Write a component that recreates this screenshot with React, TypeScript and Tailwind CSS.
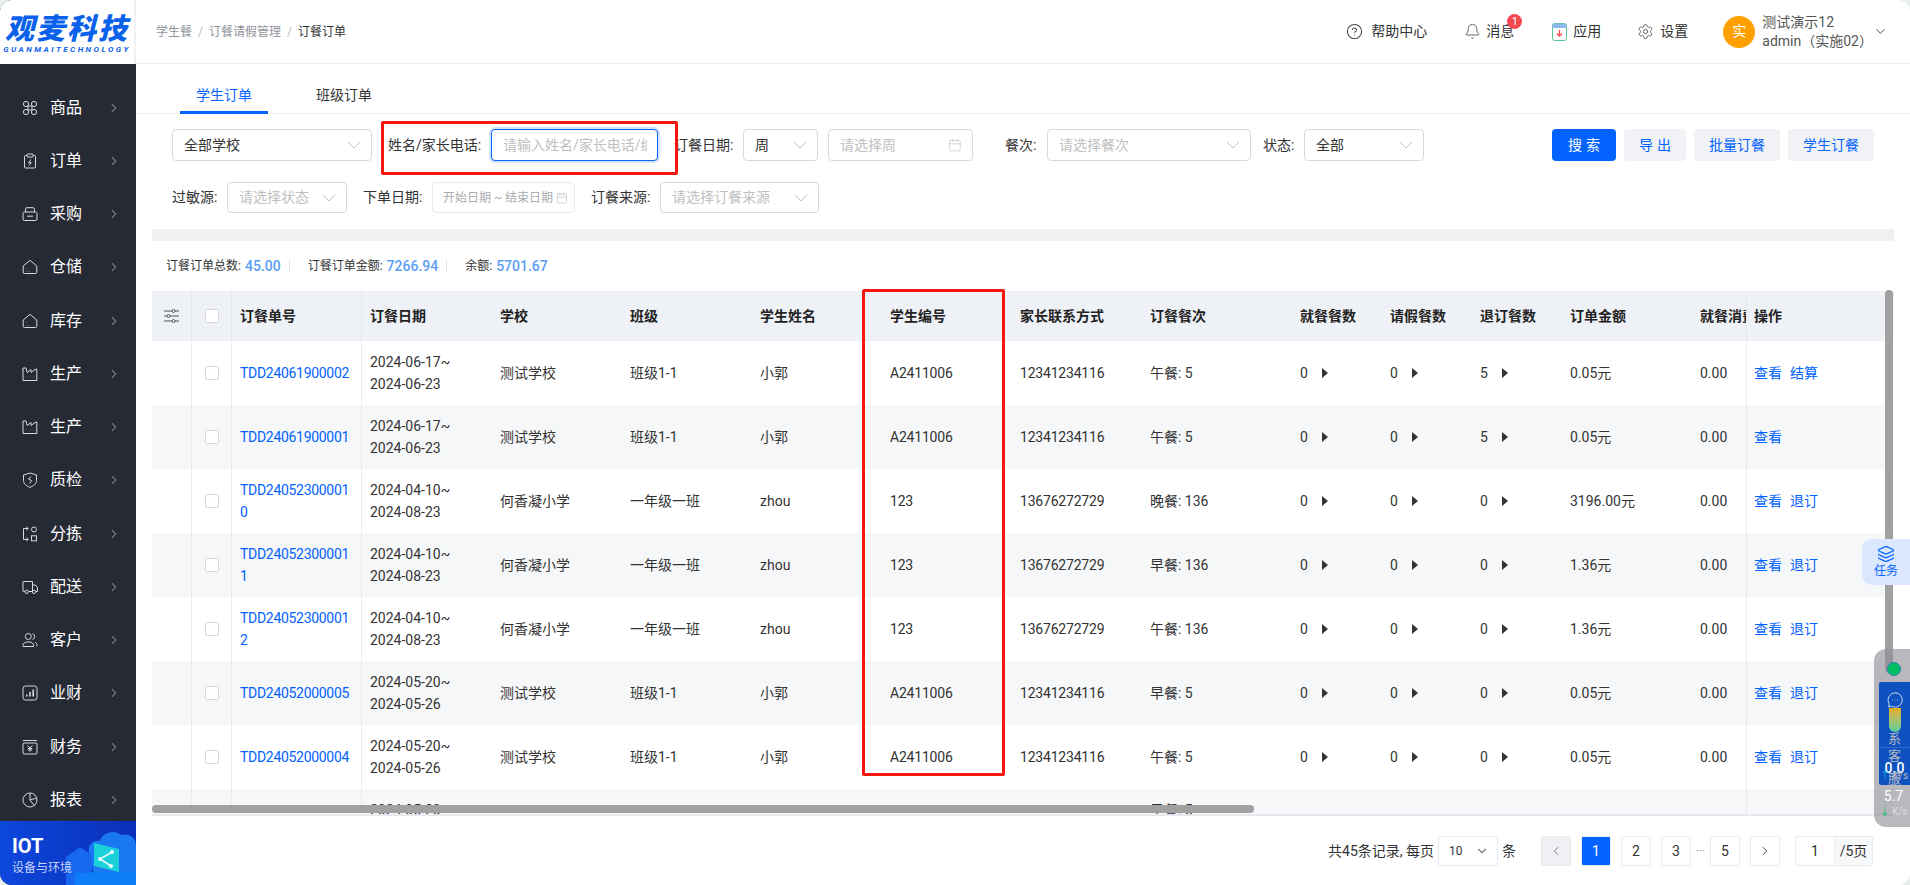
import React from "react";
import { CircleHelp, Bell, Settings, ChevronDown, ChevronRight, ChevronLeft, Calendar, Layers } from "lucide-react";

const Caret = () => (
	<svg width="14" height="8" viewBox="0 0 14 8" fill="none" stroke="#bfc2c7" strokeWidth="1" className="shrink-0">
		<polyline points="1,1 7,7 13,1" />
	</svg>
);

const sideIcons: Record<string, React.ReactNode> = {
	goods: (
		<>
			<circle cx="4" cy="4" r="2.6" />
			<circle cx="12" cy="4" r="2.6" />
			<circle cx="4" cy="12" r="2.6" />
			<circle cx="12" cy="12" r="2.6" />
			<rect x="6" y="6" width="4" height="4" />
		</>
	),
	order: (
		<>
			<path d="M5 2.5H3.5A1 1 0 0 0 2.5 3.5V14a1 1 0 0 0 1 1h9a1 1 0 0 0 1-1V3.5a1 1 0 0 0-1-1H11" />
			<rect x="5" y="1" width="6" height="3" rx=".5" />
			<path d="M9 6.5 6.5 9.7H9.3L7 12.5" />
		</>
	),
	buy: (
		<>
			<rect x="1" y="6" width="14" height="8.5" rx="1.5" />
			<path d="M3.5 6V3.2A1.5 1.5 0 0 1 5 1.7h6a1.5 1.5 0 0 1 1.5 1.5V6" />
			<path d="M5 10.2h6" />
		</>
	),
	store: (
		<>
			<path d="M1.2 7 8 1.3 14.8 7v6.2a1.3 1.3 0 0 1-1.3 1.3h-11a1.3 1.3 0 0 1-1.3-1.3Z" />
			<path d="M4.6 9.6v.2M4.6 12v.2M7 12v.2" strokeWidth="1.5" />
		</>
	),
	factory: (
		<>
			<path d="M1 14.5V2h3l1.2 4.5L9 3.5v3l4-3 1.8-.5v11.5Z" />
			<path d="M4.5 11h.2M8 11h.2M11.5 11h.2" strokeWidth="1.5" />
		</>
	),
	check: (
		<>
			<path d="M8 1 14.5 3v5.5c0 3.2-2.8 5.5-6.5 6.8-3.7-1.3-6.5-3.6-6.5-6.8V3Z" />
			<path d="M8.7 4.5 6.6 7.2l3 1.3-2 3" />
		</>
	),
	sort: (
		<>
			<path d="M6 2.5H1.5v11H6M4.3 11.5 6.3 13.5 4.3 15M4.3.8 6.3 2.5 4.3 4.2" />
			<circle cx="12" cy="3.5" r="2.5" />
			<rect x="9.5" y="9.8" width="5" height="5" />
		</>
	),
	truck: (
		<>
			<path d="M3 12.5H1.5a.5.5 0 0 1-.5-.5V3a.5.5 0 0 1 .5-.5h9v10H6.5M10.5 6h3l2 3v3.5h-1.7" />
			<circle cx="4.7" cy="12.8" r="1.7" />
			<circle cx="12" cy="12.8" r="1.7" />
		</>
	),
	user: (
		<>
			<circle cx="6.3" cy="4.5" r="3" />
			<path d="M1 14.5v-1c0-2.2 2-3.6 5.3-3.6s5.3 1.4 5.3 3.6v1Z" />
			<path d="M10.5 1.6a3 3 0 0 1 0 5.8M13 10.2c1.3.6 2 1.8 2 3.2v1" />
		</>
	),
	biz: (
		<>
			<rect x="1" y="1" width="14" height="14" rx="2.5" />
			<path d="M4.8 11.5V9.5M8 11.5V7M11.2 11.5V4.5" strokeWidth="1.6" />
		</>
	),
	money: (
		<>
			<path d="M1 1.5h14" />
			<rect x="1" y="4" width="14" height="11" rx="1" />
			<path d="M5.5 6.5 8 9l2.5-2.5M8 9v3.5M5.8 9.5h4.4M5.8 11h4.4" />
		</>
	),
	report: (
		<>
			<circle cx="8" cy="8" r="7" />
			<path d="M8 1v7l4 5.3M8 8 14.5 6" />
		</>
	),
};

const menu = [
	["goods", "商品"],
	["order", "订单"],
	["buy", "采购"],
	["store", "仓储"],
	["store", "库存"],
	["factory", "生产"],
	["factory", "生产"],
	["check", "质检"],
	["sort", "分拣"],
	["truck", "配送"],
	["user", "客户"],
	["biz", "业财"],
	["money", "财务"],
	["report", "报表"],
];

const colClass = "grid grid-cols-[40px_40px_130px_130px_130px_130px_130px_130px_130px_150px_90px_90px_90px_130px_54px_148px]";

const headers = ["订餐单号", "订餐日期", "学校", "班级", "学生姓名", "学生编号", "家长联系方式", "订餐餐次", "就餐餐数", "请假餐数", "退订餐数", "订单金额", "就餐消费"];

const rows = [
	{ no: "TDD24061900002", d: ["2024-06-17~", "2024-06-23"], school: "测试学校", cls: "班级1-1", name: "小郭", sn: "A2411006", tel: "12341234116", meal: "午餐: 5", c: ["0", "0", "5"], amt: "0.05元", act: ["查看", "结算"] },
	{ no: "TDD24061900001", d: ["2024-06-17~", "2024-06-23"], school: "测试学校", cls: "班级1-1", name: "小郭", sn: "A2411006", tel: "12341234116", meal: "午餐: 5", c: ["0", "0", "5"], amt: "0.05元", act: ["查看"] },
	{ no: "TDD240523000010", d: ["2024-04-10~", "2024-08-23"], school: "何香凝小学", cls: "一年级一班", name: "zhou", sn: "123", tel: "13676272729", meal: "晚餐: 136", c: ["0", "0", "0"], amt: "3196.00元", act: ["查看", "退订"] },
	{ no: "TDD240523000011", d: ["2024-04-10~", "2024-08-23"], school: "何香凝小学", cls: "一年级一班", name: "zhou", sn: "123", tel: "13676272729", meal: "早餐: 136", c: ["0", "0", "0"], amt: "1.36元", act: ["查看", "退订"] },
	{ no: "TDD240523000012", d: ["2024-04-10~", "2024-08-23"], school: "何香凝小学", cls: "一年级一班", name: "zhou", sn: "123", tel: "13676272729", meal: "午餐: 136", c: ["0", "0", "0"], amt: "1.36元", act: ["查看", "退订"] },
	{ no: "TDD24052000005", d: ["2024-05-20~", "2024-05-26"], school: "测试学校", cls: "班级1-1", name: "小郭", sn: "A2411006", tel: "12341234116", meal: "早餐: 5", c: ["0", "0", "0"], amt: "0.05元", act: ["查看", "退订"] },
	{ no: "TDD24052000004", d: ["2024-05-20~", "2024-05-26"], school: "测试学校", cls: "班级1-1", name: "小郭", sn: "A2411006", tel: "12341234116", meal: "午餐: 5", c: ["0", "0", "0"], amt: "0.05元", act: ["查看", "退订"] },
	{ no: "TDD24052000003", d: ["2024-05-20~", "2024-05-26"], school: "测试学校", cls: "班级1-1", name: "小郭", sn: "A2411006", tel: "12341234116", meal: "早餐: 5\n午餐: 5", c: ["0", "0", "0"], amt: "0.05元", act: ["查看", "退订"] },
];

const Box = ({ w, text, ph, icon, h = "h-8", ring }: { w: string; text?: string; ph?: string; icon?: "cal" | "caret"; h?: string; ring?: boolean }) => (
	<div className={`${w} ${h} ${ring ? "border-[#0363ff] shadow-[0_0_0_2px_#d5e4fb]" : "border-[#d9d9d9]"} flex items-center justify-between border rounded-[4px] pl-[11px] pr-[10px] shrink-0 bg-white overflow-hidden`}>
		<span className={`${text ? "text-[#333]" : "text-[#bfbfbf]"} text-[14px] whitespace-nowrap overflow-hidden`}>{text || ph}</span>
		{icon === "caret" && <Caret />}
		{icon === "cal" && <Calendar size={14} strokeWidth={1} color="#b5b8bd" className="shrink-0" />}
	</div>
);

const Label = ({ children, w, className = "" }: { children: React.ReactNode; w: string; className?: string }) => (
	<span className={`${w} ${className} text-[14px] text-[#333] whitespace-nowrap shrink-0`}>{children}</span>
);

const PageBtn = ({ children, className = "" }: { children: React.ReactNode; className?: string }) => (
	<div className={`w-[30px] h-[30px] flex items-center justify-center border border-[#e8ebf0] rounded-[2px] text-[14px] text-[#333] ${className}`}>{children}</div>
);

const Tri = () => <span className="ml-[14px] w-0 h-0 border-y-[5px] border-y-transparent border-l-[6px] border-l-[#333]" />;

export default function App() {
	return (
		<div className="w-[1910px] h-[885px] bg-[#e8f0ef] overflow-hidden font-['Roboto','Noto_Sans_CJK_SC',sans-serif] text-[#333]">
			<div className="relative w-full h-full flex bg-white rounded-[12px] overflow-hidden">
				<aside className="w-[136px] shrink-0 flex flex-col bg-[#262a35]">
					<div className="h-[64px] shrink-0 bg-white border-r-2 border-[#f0f2f2] flex flex-col items-center justify-center overflow-hidden pt-[3px]">
						<div className="text-[29px] leading-[32px] font-black italic text-[#0a62ea] tracking-[2px] whitespace-nowrap">观麦科技</div>
						<div className="text-[8px] leading-[10px] font-bold italic text-[#0a62ea] tracking-[2.5px] whitespace-nowrap">GUANMAITECHNOLOGY</div>
					</div>
					<nav className="flex-1 min-h-0 flex flex-col pt-[17px]">
						{menu.map(([icon, label], i) => (
							<div key={i} className="h-[53.25px] flex items-center pl-[22px] shrink-0">
								<svg width="16" height="16" viewBox="0 0 16 16" fill="none" stroke="#d8d9dc" strokeWidth="1">
									{sideIcons[icon]}
								</svg>
								<span className="ml-3 text-[16px] text-white">{label}</span>
								<ChevronRight size={14} strokeWidth={2} color="#74777f" className="ml-[25px]" />
							</div>
						))}
					</nav>
					<div className="relative h-[64px] shrink-0 bg-gradient-to-r from-[#0d47dc] to-[#0a2fb8] pl-3 pt-[13px] overflow-hidden">
						<svg className="absolute right-0 top-0" width="70" height="64" viewBox="0 0 70 64">
							<path d="M24 34c-4-8 2-16 10-14 2-8 14-12 21-6 7-2 15 2 15 10v30H28Z" fill="#1a78f2" />
							<path d="M0 36 14 26l12 8v30H0Z" fill="#1668f0" />
							<path d="M9 64V52l55-2 6 2v12Z" fill="#0f7df8" />
							<path d="M28 22 53 28v23L28 45Z" fill="#1bd0d8" />
							<path d="M46 31 34 38l11 7" fill="none" stroke="#e5fbff" strokeWidth="1.5" />
							<circle cx="46" cy="31" r="2" fill="#e5fbff" />
							<circle cx="34" cy="38" r="2" fill="#e5fbff" />
							<circle cx="45" cy="45" r="2" fill="#e5fbff" />
						</svg>
						<div className="relative text-[20px] leading-[24px] font-bold text-white">IOT</div>
						<div className="relative text-[12px] leading-[20px] text-[#c6d3f7] whitespace-nowrap">设备与环境</div>
					</div>
				</aside>

				<main className="flex-1 min-w-0 flex flex-col">
					<header className="h-[64px] shrink-0 flex items-center border-b border-[#ececec] pl-5">
						<span className="text-[12px] text-[#8f939a]">学生餐</span>
						<span className="text-[12px] text-[#b8bbc0] mx-[6px]">/</span>
						<span className="text-[12px] text-[#8f939a]">订餐请假管理</span>
						<span className="text-[12px] text-[#b8bbc0] mx-[6px]">/</span>
						<span className="text-[12px] text-[#333]">订餐订单</span>
						<div className="ml-auto flex items-center pr-[22px]">
							<CircleHelp size={17} strokeWidth={1.5} color="#444" />
							<span className="ml-2 text-[14px]">帮助中心</span>
							<Bell size={17} strokeWidth={1.4} color="#666" className="ml-[37px]" />
							<span className="relative ml-[5px] text-[14px]">
								消息
								<span className="absolute -top-[7px] -right-[8px] w-[15px] h-[15px] rounded-full bg-[#f5484f] text-white text-[11px] leading-[15px] text-center">1</span>
							</span>
							<svg className="ml-[38px]" width="15" height="18" viewBox="0 0 15 18">
								<rect x=".5" y=".5" width="14" height="17" rx="2" fill="#fff" stroke="#58c795" />
								<rect x=".5" y=".5" width="14" height="4.5" rx="1.5" fill="#8db8ea" />
								<path d="M7.5 7v6M5 10.5l2.5 2.5 2.5-2.5" fill="none" stroke="#f0524f" strokeWidth="1.3" />
							</svg>
							<span className="ml-[6px] text-[14px]">应用</span>
							<Settings size={17} strokeWidth={1.4} color="#666" className="ml-[36px]" />
							<span className="ml-[6px] text-[14px]">设置</span>
							<div className="ml-[35px] w-8 h-8 rounded-full bg-[#ff9f00] text-white text-[14px] flex items-center justify-center">实</div>
							<div className="ml-[7px] flex flex-col text-[14px] leading-[19px] text-[#555]">
								<span>测试演示12</span>
								<span>admin（实施02）</span>
							</div>
							<ChevronDown size={15} strokeWidth={1.5} color="#444" />
						</div>
					</header>

					<div className="h-[50px] shrink-0 flex border-b border-[#ececec] pl-[44px]">
						<div className="relative w-[88px] flex items-center justify-center text-[14px] text-[#0363ff] pt-[13px]">
							学生订单
							<span className="absolute left-0 right-0 -bottom-px h-[3px] bg-[#0363ff]" />
						</div>
						<div className="w-[56px] ml-[48px] flex items-center justify-center text-[14px] whitespace-nowrap pt-[13px]">班级订单</div>
					</div>

					<section className="pl-9 pr-9 pt-[15px] shrink-0">
						<div className="flex items-center h-8">
							<Box w="w-[200px]" text="全部学校" icon="caret" />
							<Label w="w-[95px]" className="ml-4">姓名/家长电话:</Label>
							<Box w="w-[167px]" ph="请输入姓名/家长电话/编号" ring h="h-8 ml-2" />
							<Label w="w-[61px]" className="ml-4">订餐日期:</Label>
							<Box w="w-[75px]" text="周" icon="caret" h="h-8 ml-2" />
							<Box w="w-[145px]" ph="请选择周" icon="cal" h="h-8 ml-[10px]" />
							<Label w="w-[35px]" className="ml-8">餐次:</Label>
							<Box w="w-[204px]" ph="请选择餐次" icon="caret" h="h-8 ml-[7px]" />
							<Label w="w-[33px]" className="ml-3">状态:</Label>
							<Box w="w-[120px]" text="全部" icon="caret" h="h-8 ml-2" />
							<div className="ml-auto flex gap-2 text-[14px]">
								<button className="w-16 h-8 pl-1 rounded-[4px] bg-[#0363ff] text-white tracking-[4px]">搜索</button>
								<button className="w-[62px] h-8 pl-1 rounded-[4px] bg-[#f0f2f5] text-[#0363ff] tracking-[4px]">导出</button>
								<button className="w-[86px] h-8 rounded-[4px] bg-[#f0f2f5] text-[#0363ff]">批量订餐</button>
								<button className="w-[86px] h-8 rounded-[4px] bg-[#f0f2f5] text-[#0363ff]">学生订餐</button>
							</div>
						</div>
						<div className="flex items-center h-[31px] mt-[21px]">
							<Label w="w-[48px]">过敏源:</Label>
							<Box w="w-[120px]" ph="请选择状态" icon="caret" h="h-[31px] ml-[7px]" />
							<Label w="w-[62px]" className="ml-4">下单日期:</Label>
							<div className="ml-[7px] w-[143px] h-[31px] border border-[#e8e8e8] rounded-[4px] flex items-center justify-between pl-[10px] pr-[6px] shrink-0 text-[12px] text-[#a9acb1] whitespace-nowrap">
								<span>开始日期 ~ 结束日期</span>
								<Calendar size={12} strokeWidth={1} color="#a9acb1" />
							</div>
							<Label w="w-[62px]" className="ml-4">订餐来源:</Label>
							<Box w="w-[159px]" ph="请选择订餐来源" icon="caret" h="h-[31px] ml-[7px]" />
						</div>
					</section>

					<div className="ml-4 w-[1742px] h-3 mt-4 bg-[#f0f0f0] shrink-0" />

					<div className="h-[50px] shrink-0 flex items-center pl-[30px] text-[12px]">
						<span>订餐订单总数:</span>
						<span className="ml-1 text-[14px] font-medium text-[#5b9df5]">45.00</span>
						<span className="ml-2 w-px h-[14px] bg-[#e5e5e5]" />
						<span className="ml-[18px]">订餐订单金额:</span>
						<span className="ml-1 text-[14px] font-medium text-[#5b9df5]">7266.94</span>
						<span className="ml-2 w-px h-[14px] bg-[#e5e5e5]" />
						<span className="ml-[18px]">余额:</span>
						<span className="ml-1 text-[14px] font-medium text-[#5b9df5]">5701.67</span>
					</div>

					<div className="ml-4 w-[1742px] h-[523px] shrink-0 overflow-hidden border-b-2 border-[#e5e8ee] box-content">
						<div className={`${colClass} h-[50px] bg-[#eef1f6] text-[14px] font-bold text-[#222]`}>
							<div className="flex items-center justify-center border-r border-[#e3e6ec]">
								<svg width="15" height="14" viewBox="0 0 15 14" fill="none" stroke="#555" strokeWidth="1">
									<path d="M0 2h8M11 2h4M0 7h3M6 7h9M0 12h8M11 12h4" />
									<circle cx="9.5" cy="2" r="1.5" />
									<circle cx="4.5" cy="7" r="1.5" />
									<circle cx="9.5" cy="12" r="1.5" />
								</svg>
							</div>
							<div className="flex items-center justify-center border-r border-[#e3e6ec]">
								<span className="w-[14px] h-[14px] bg-white border border-[#d9d9d9] rounded-[2px]" />
							</div>
							{headers.map((h, i) => (
								<div key={h} className={`flex items-center pl-2 whitespace-nowrap overflow-hidden ${i === 0 ? "border-r border-[#e3e6ec]" : ""}`}>{h}</div>
							))}
							<div className="flex items-center pl-[7px] border-l border-[#e3e6ec]">操作</div>
						</div>
						{rows.map((r, i) => (
							<div key={r.no} className={`${colClass} h-16 text-[14px] text-[#333] ${i % 2 ? "bg-[#f6f7f9]" : "bg-white"}`}>
								<div className="border-r border-[#e9ebef]" />
								<div className="flex items-center justify-center border-r border-[#e9ebef]">
									<span className="w-[14px] h-[14px] bg-white border border-[#d9d9d9] rounded-[2px]" />
								</div>
								<div className="flex items-center px-2 border-r border-[#e9ebef] text-[#0363ff] leading-[22px] break-all tracking-[-0.3px]">{r.no}</div>
								<div className="flex flex-col justify-center pl-2 leading-[22px]">
									<span>{r.d[0]}</span>
									<span>{r.d[1]}</span>
								</div>
								<div className="flex items-center pl-2">{r.school}</div>
								<div className="flex items-center pl-2">{r.cls}</div>
								<div className="flex items-center pl-2">{r.name}</div>
								<div className="flex items-center pl-2 tracking-[-0.2px]">{r.sn}</div>
								<div className="flex items-center pl-2 tracking-[-0.2px]">{r.tel}</div>
								<div className="flex items-center pl-2 leading-[22px] whitespace-pre-line">{r.meal}</div>
								{r.c.map((n, j) => (
									<div key={j} className="flex items-center pl-2">
										<span>{n}</span>
										<Tri />
									</div>
								))}
								<div className="flex items-center pl-2">{r.amt}</div>
								<div className="flex items-center pl-2">0.00</div>
								<div className="flex items-center pl-[7px] gap-2 border-l border-[#e9ebef] text-[#0363ff]">
									{r.act.map((a) => (
										<span key={a}>{a}</span>
									))}
								</div>
							</div>
						))}
					</div>

					<div className="flex-1 flex items-start justify-end pr-[37px] pt-5 text-[14px] whitespace-nowrap">
						<span className="leading-[30px]">共45条记录, 每页</span>
						<div className="ml-1 w-[60px] h-[30px] border border-[#e8ebf0] rounded-[2px] flex items-center justify-between pl-[10px] pr-2">
							<span className="text-[12px]">10</span>
							<ChevronDown size={14} color="#7c8088" />
						</div>
						<span className="ml-1 leading-[30px]">条</span>
						<PageBtn className="ml-[25px] bg-[#eef0f3]"><ChevronLeft size={14} strokeWidth={1.5} color="#777" /></PageBtn>
						<PageBtn className="ml-[10px] bg-[#0363ff] border-[#0363ff] text-white">1</PageBtn>
						<PageBtn className="ml-[10px]">2</PageBtn>
						<PageBtn className="ml-[10px]">3</PageBtn>
						<span className="w-[19px] text-center leading-[30px] text-[#999] text-[12px]">···</span>
						<PageBtn>5</PageBtn>
						<PageBtn className="ml-[10px]"><ChevronRight size={14} strokeWidth={1.5} color="#333" /></PageBtn>
						<div className="ml-[15px] w-10 h-[30px] border border-[#e8ebf0] rounded-l-[2px] flex items-center justify-center">1</div>
						<div className="w-[38px] h-[30px] border border-l-0 border-[#e8ebf0] rounded-r-[2px] bg-[#f7f8fa] flex items-center justify-center">/5页</div>
					</div>
				</main>

				{/* scrollbars */}
				<div className="absolute left-[152px] top-[805px] w-[1102px] h-2 rounded-full bg-[#a1a1a1]" />
				<div className="absolute left-[1885px] top-[290px] w-2 h-[383px] rounded-full bg-[#a1a1a1]" />

				{/* review marks */}
				<div className="absolute left-[381px] top-[121px] w-[297px] h-[54px] border-[3px] border-[#f5170f] rounded-[2px]" />
				<div className="absolute left-[862px] top-[289px] w-[143px] h-[487px] border-[3px] border-[#f5170f] rounded-[2px]" />

				{/* floating task tab */}
				<div className="absolute left-[1862px] top-[539px] w-[48px] h-[46px] rounded-l-[10px] bg-[#dbe7ff] flex flex-col items-center justify-center text-[#0363ff]">
					<Layers size={18} strokeWidth={1.5} />
					<span className="text-[12px] leading-[16px]">任务</span>
				</div>

				{/* network widget */}
				<div className="absolute left-[1874px] top-[649px] w-9 h-[178px] rounded-l-[12px] bg-[rgba(140,140,148,0.62)] flex flex-col items-center overflow-hidden">
					<span className="mt-[13px] ml-[4px] w-[14px] h-[14px] rounded-full bg-[#00bf63] border border-[#2a7fb8] shrink-0" />
					<div className="relative mt-[6px] ml-[5px] w-[31px] h-[103px] shrink-0 bg-[#0d52c0] rounded-l-[2px] flex flex-col items-center">
						<svg className="mt-[10px] shrink-0" width="16" height="16" viewBox="0 0 16 16" fill="none" stroke="#c9d6ea" strokeWidth="1">
							<path d="M8 .8a7.2 7.2 0 1 1-3.6 13.4L1.5 15l.8-2.9A7.2 7.2 0 0 1 8 .8Z" />
							<path d="M5 8h.4M7.8 8h.4M10.6 8h.4" strokeWidth="1.4" />
						</svg>
						<span className="w-3 h-[24px] rounded-b-[6px] bg-gradient-to-b from-[#e3ac0d] to-[#4fd0a0] shrink-0" />
						<span className="text-[13px] leading-[14px] text-[#b9b9c0]">系</span>
						<span className="w-full h-px bg-[#2f6ccc] mt-px shrink-0" />
						<span className="text-[13px] leading-[14px] text-[#b9b9c0] mt-px">客</span>
						<span className="text-[14px] leading-[10px] text-white font-medium">0.0</span>
						<span className="text-[13px] leading-[12px] text-[#b9b9c0]">服</span>
						<span className="absolute left-[1px] bottom-[3px] text-[10px] leading-[12px] text-[#b9b9c0] whitespace-nowrap"><span className="text-[#1fb0f0]">↑</span> K/s</span>
					</div>
					<span className="ml-[3px] mt-[2px] text-[14px] leading-[18px] text-white">5.7</span>
					<span className="ml-[3px] text-[10px] leading-[14px] text-[#dedee2] whitespace-nowrap"><span className="text-[#00bf63]">↓</span> K/s</span>
				</div>
			</div>
		</div>
	);
}
